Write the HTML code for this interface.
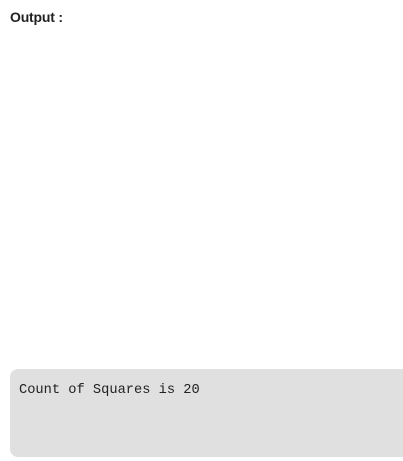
<!DOCTYPE html>
<html><head><style>
body{margin:0;width:403px;height:461px;background:#fff;position:relative;overflow:hidden}
.h{position:absolute;left:10px;top:9px;font:bold 14px "Liberation Sans",sans-serif;color:#222;letter-spacing:-0.2px}
.box{position:absolute;left:10px;top:369px;width:400px;height:88px;background:#e0e0e0;border-radius:8px}
.t{position:absolute;left:19px;top:383px;font:13.7px "Liberation Mono",monospace;color:#222;white-space:pre}
</style></head><body>
<div class="h">Output :</div>
<div class="box"></div>
<div class="t">Count of Squares is 20</div>
</body></html>
